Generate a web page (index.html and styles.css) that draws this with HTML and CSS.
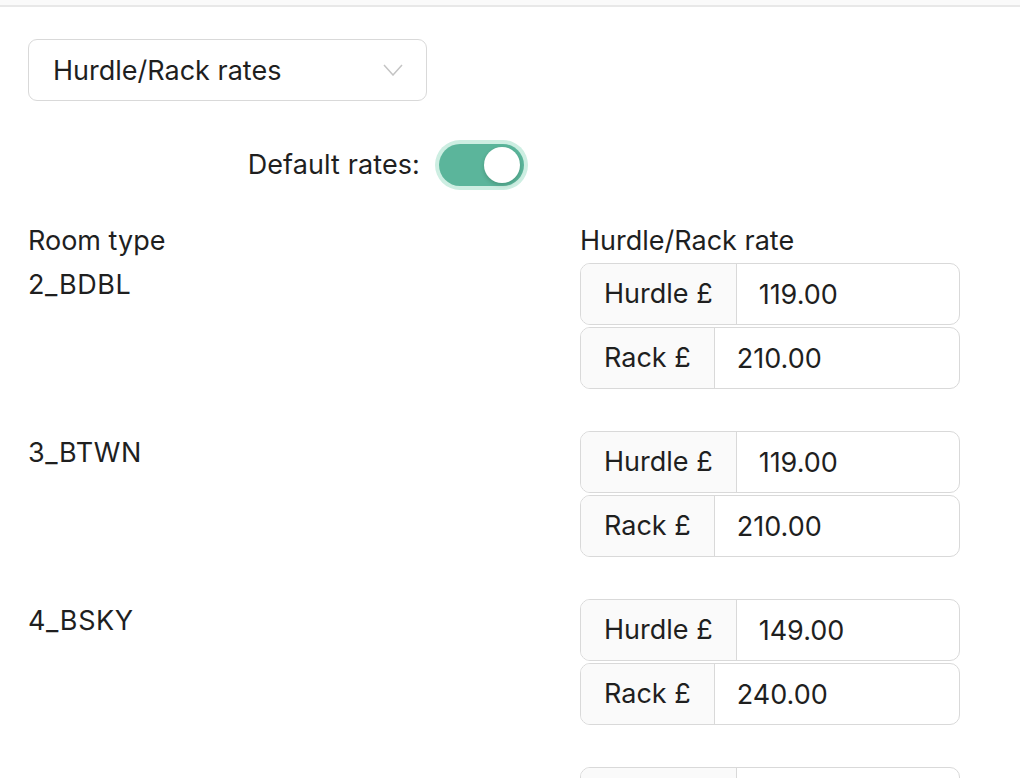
FILE: index.html
```html
<!DOCTYPE html>
<html lang="en">
<head>
<meta charset="utf-8">
<title>Hurdle/Rack rates</title>
<link rel="stylesheet" href="styles.css">
</head>
<body>
<div class="topbar"></div>
<main class="content">
  <div class="select">
    <span class="select-value">Hurdle/Rack rates</span>
    <svg class="chevron" width="20" height="12" viewBox="0 0 20 12" aria-hidden="true"><path d="M1 1 L10 11 L19 1" fill="none" stroke="#c4c4c4" stroke-width="1.5"/></svg>
  </div>

  <div class="default-row">
    <span class="default-label">Default rates:</span>
    <span class="switch"><span class="knob"></span></span>
  </div>

  <div class="grid header">
    <div>Room type</div>
    <div>Hurdle/Rack rate</div>
  </div>

  <div class="grid room">
    <div class="room-name">2_BDBL</div>
    <div class="rates">
      <div class="group"><span class="addon">Hurdle £</span><span class="val">119.00</span></div>
      <div class="group"><span class="addon">Rack £</span><span class="val">210.00</span></div>
    </div>
  </div>

  <div class="grid room">
    <div class="room-name">3_BTWN</div>
    <div class="rates">
      <div class="group"><span class="addon">Hurdle £</span><span class="val">119.00</span></div>
      <div class="group"><span class="addon">Rack £</span><span class="val">210.00</span></div>
    </div>
  </div>

  <div class="grid room">
    <div class="room-name">4_BSKY</div>
    <div class="rates">
      <div class="group"><span class="addon">Hurdle £</span><span class="val">149.00</span></div>
      <div class="group"><span class="addon">Rack £</span><span class="val">240.00</span></div>
    </div>
  </div>

  <div class="grid room">
    <div class="room-name">5_BDBL</div>
    <div class="rates">
      <div class="group"><span class="addon">Hurdle £</span><span class="val">149.00</span></div>
      <div class="group"><span class="addon">Rack £</span><span class="val">240.00</span></div>
    </div>
  </div>
</main>
</body>
</html>
```

FILE: styles.css
```css
* { box-sizing: border-box; }
html, body { margin: 0; background: #fff; }
body {
  font-family: Inter, "Noto Sans", "Liberation Sans", sans-serif;
  font-size: 27px;
  line-height: 36px;
  color: #1f1f1f;
  overflow: hidden;
}
.topbar {
  height: 7px;
  background: #fafafa;
  border-bottom: 2px solid #e8e8e8;
}
.content {
  padding: 32px 28px 0 28px;
}
.select {
  width: 399px;
  height: 62px;
  border: 1.5px solid #d9d9d9;
  border-radius: 9px;
  display: flex;
  align-items: center;
  justify-content: space-between;
  padding: 0 23px 0 24px;
}
.select-value { margin-top: 1px; }
.chevron { display: block; }
.default-row {
  margin-top: 43px;
  display: flex;
  align-items: center;
  height: 42px;
}
.default-label {
  width: 392px;
  text-align: right;
  margin-right: 19px;
  letter-spacing: 0.1px;
}
.switch {
  width: 85px;
  height: 42px;
  border-radius: 21px;
  background: #5bb59b;
  box-shadow: 0 0 0 4px #cdeee2;
  position: relative;
  display: inline-block;
}
.knob {
  position: absolute;
  top: 3px;
  right: 4px;
  width: 36px;
  height: 36px;
  border-radius: 50%;
  background: #fff;
  box-shadow: 0 2px 4px rgba(0, 35, 11, 0.2);
}
.grid {
  display: grid;
  grid-template-columns: 552px 380px;
}
.header {
  margin-top: 37px;
}
.room {
  margin-top: 4px;
}
.room + .room { margin-top: 42px; }
.room-name {
  padding-top: 4px;
  letter-spacing: 0.6px;
}
.rates {
  display: flex;
  flex-direction: column;
  gap: 2px;
}
.group {
  display: flex;
  height: 62px;
  border: 1.5px solid #d9d9d9;
  border-radius: 10px;
  overflow: hidden;
}
.addon {
  background: #fafafa;
  border-right: 1.5px solid #d9d9d9;
  padding: 0 23px;
  display: flex;
  align-items: center;
}
.val {
  padding-left: 22px;
  padding-top: 1px;
  display: flex;
  align-items: center;
}
```
